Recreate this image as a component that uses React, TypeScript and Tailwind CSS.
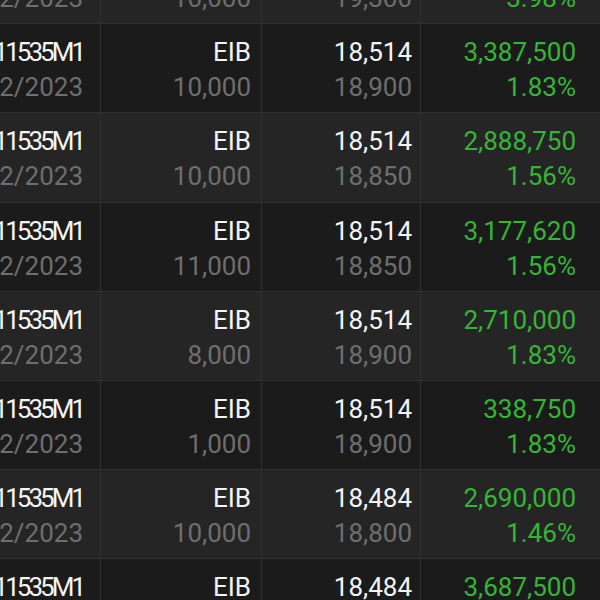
type Row = {
  code: string;
  date: string;
  bank: string;
  qty: string;
  price: string;
  ref: string;
  value: string;
  pct: string;
};

const rows: Row[] = [
  { code: "CE11535M1", date: "15/12/2023", bank: "EIB", qty: "10,000", price: "18,514", ref: "19,300", value: "7,860,000", pct: "3.98%" },
  { code: "CE11535M1", date: "15/12/2023", bank: "EIB", qty: "10,000", price: "18,514", ref: "18,900", value: "3,387,500", pct: "1.83%" },
  { code: "CE11535M1", date: "15/12/2023", bank: "EIB", qty: "10,000", price: "18,514", ref: "18,850", value: "2,888,750", pct: "1.56%" },
  { code: "CE11535M1", date: "15/12/2023", bank: "EIB", qty: "11,000", price: "18,514", ref: "18,850", value: "3,177,620", pct: "1.56%" },
  { code: "CE11535M1", date: "15/12/2023", bank: "EIB", qty: "8,000", price: "18,514", ref: "18,900", value: "2,710,000", pct: "1.83%" },
  { code: "CE11535M1", date: "15/12/2023", bank: "EIB", qty: "1,000", price: "18,514", ref: "18,900", value: "338,750", pct: "1.83%" },
  { code: "CE11535M1", date: "15/12/2023", bank: "EIB", qty: "10,000", price: "18,484", ref: "18,800", value: "2,690,000", pct: "1.46%" },
  { code: "CE11535M1", date: "15/12/2023", bank: "EIB", qty: "10,000", price: "18,484", ref: "18,800", value: "3,687,500", pct: "1.83%" },
];

const cell = "flex flex-col justify-center pt-[4px] border-r border-[#303030] overflow-hidden whitespace-nowrap";

export default function App() {
  return (
    <div className="w-[600px] h-[600px] overflow-hidden bg-[#1b1b1b] font-['Roboto',sans-serif] text-[26px] leading-[35px]">
      <div className="-mt-[65px]">
        {rows.map((r, i) => (
          <div
            key={i}
            className={`grid grid-cols-[101px_161px_159px_1fr] h-[89.2px] border-b border-[#303030] ${
              i % 2 === 0 ? "bg-[#252525]" : "bg-[#1b1b1b]"
            }`}
          >
            <div className={`${cell} items-end pr-[17px]`}>
              <span className="text-[#f4f4f4] tracking-[-3px]">{r.code}</span>
              <span className="text-[#6e6e6e]">{r.date}</span>
            </div>
            <div className={`${cell} items-end pr-[10px]`}>
              <span className="text-[#f4f4f4]">{r.bank}</span>
              <span className="text-[#6e6e6e]">{r.qty}</span>
            </div>
            <div className={`${cell} items-end pr-[8px]`}>
              <span className="text-[#f4f4f4]">{r.price}</span>
              <span className="text-[#6e6e6e]">{r.ref}</span>
            </div>
            <div className="flex flex-col justify-center items-end pt-[4px] pr-[24px] whitespace-nowrap">
              <span className="text-[#35b535]">{r.value}</span>
              <span className="text-[#35b535]">{r.pct}</span>
            </div>
          </div>
        ))}
      </div>
    </div>
  );
}
